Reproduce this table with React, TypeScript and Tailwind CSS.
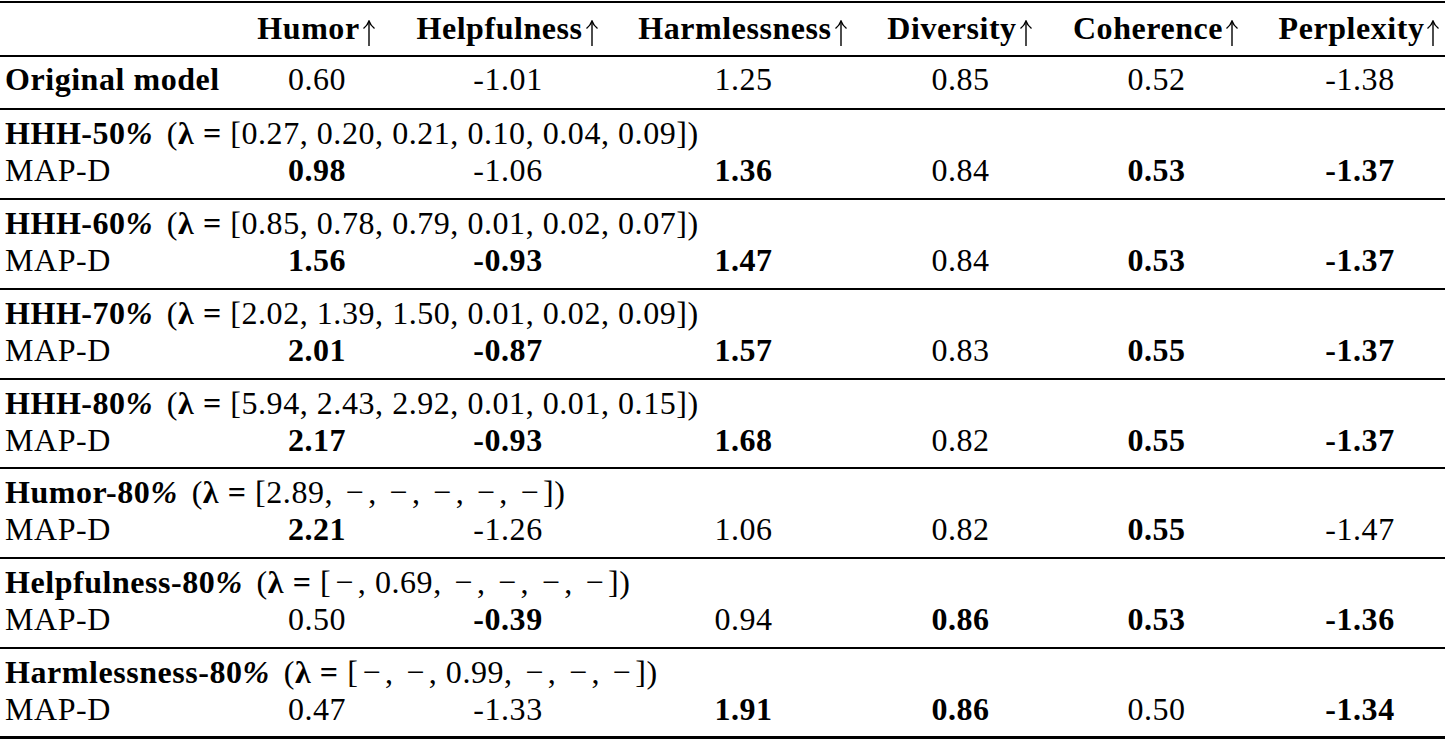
const cols = "grid grid-cols-[237px_160px_222px_249px_185px_207px_185px]";

const headers = ["Humor", "Helpfulness", "Harmlessness", "Diversity", "Coherence", "Perplexity"];

type Cell = { v: string; b?: boolean };

type Group = {
  name: string;
  lambda: (number | null)[];
  cells: Cell[];
  pb: string;
};

const c = (v: string, b = false): Cell => ({ v, b });

const groups: Group[] = [
  {
    name: "HHH-50",
    lambda: [0.27, 0.2, 0.21, 0.1, 0.04, 0.09],
    cells: [c("0.98", true), c("-1.06"), c("1.36", true), c("0.84"), c("0.53", true), c("-1.37", true)],
    pb: "pb-[9px]",
  },
  {
    name: "HHH-60",
    lambda: [0.85, 0.78, 0.79, 0.01, 0.02, 0.07],
    cells: [c("1.56", true), c("-0.93", true), c("1.47", true), c("0.84"), c("0.53", true), c("-1.37", true)],
    pb: "pb-[9px]",
  },
  {
    name: "HHH-70",
    lambda: [2.02, 1.39, 1.5, 0.01, 0.02, 0.09],
    cells: [c("2.01", true), c("-0.87", true), c("1.57", true), c("0.83"), c("0.55", true), c("-1.37", true)],
    pb: "pb-[9px]",
  },
  {
    name: "HHH-80",
    lambda: [5.94, 2.43, 2.92, 0.01, 0.01, 0.15],
    cells: [c("2.17", true), c("-0.93", true), c("1.68", true), c("0.82"), c("0.55", true), c("-1.37", true)],
    pb: "pb-[8px]",
  },
  {
    name: "Humor-80",
    lambda: [2.89, null, null, null, null, null],
    cells: [c("2.21", true), c("-1.26"), c("1.06"), c("0.82"), c("0.55", true), c("-1.47")],
    pb: "pb-[9px]",
  },
  {
    name: "Helpfulness-80",
    lambda: [null, 0.69, null, null, null, null],
    cells: [c("0.50"), c("-0.39", true), c("0.94"), c("0.86", true), c("0.53", true), c("-1.36", true)],
    pb: "pb-[9px]",
  },
  {
    name: "Harmlessness-80",
    lambda: [null, null, 0.99, null, null, null],
    cells: [c("0.47"), c("-1.33"), c("1.91", true), c("0.86", true), c("0.50"), c("-1.34", true)],
    pb: "pb-[8px]",
  },
];

// thin math-style up arrow (\uparrow)
function UpArrow() {
  return (
    <svg
      width="16"
      height="26"
      viewBox="0 0 16 26"
      className="inline-block align-[-7px] ml-[1px]"
      fill="none"
      stroke="black"
      strokeWidth="1.4"
    >
      <path d="M8 1.5V26" />
      <path d="M2.5 8.5C5 6.5 7 4 8 1C9 4 11 6.5 13.5 8.5" />
    </svg>
  );
}

function ValueCells({ cells }: { cells: Cell[] }) {
  return (
    <>
      {cells.map((cell, i) => (
        <div
          key={i}
          className={`text-center ${cell.b ? "font-bold" : ""} ${i === 5 ? "pl-[15px]" : ""}`}
        >
          {cell.v}
        </div>
      ))}
    </>
  );
}

function LambdaList({ values }: { values: (number | null)[] }) {
  return (
    <span>
      [
      {values.map((v, i) => (
        <span key={i}>
          {v === null ? <span className="px-[4px]">−</span> : v.toFixed(2)}
          {i < values.length - 1 ? ", " : ""}
        </span>
      ))}
      ])
    </span>
  );
}

export default function App() {
  return (
    <div className="w-[1445px] h-[740px] bg-white pt-[1px] font-['Liberation_Serif',serif] text-[32px] leading-[37px] tracking-[0.55px] text-black">
      {/* header */}
      <div className={`${cols} border-t-2 border-black pt-[7px] pb-[8px]`}>
        <div />
        {headers.map((h, i) => (
          <div key={h} className={`text-center font-bold whitespace-nowrap ${i === 5 ? "pl-[15px]" : ""}`}>
            {h}
            <UpArrow />
          </div>
        ))}
      </div>

      {/* original model */}
      <div className={`${cols} border-t-2 border-black pt-[4px] pb-[10px]`}>
        <div className="pl-[5px] font-bold whitespace-nowrap">Original model</div>
        <ValueCells
          cells={[c("0.60"), c("-1.01"), c("1.25"), c("0.85"), c("0.52"), c("-1.38")]}
        />
      </div>

      {groups.map((g, gi) => (
        <div
          key={g.name}
          className={`border-t-2 border-black pt-[5px] ${g.pb} ${
            gi === groups.length - 1 ? "border-b-[3px]" : ""
          }`}
        >
          <div className="pl-[5px] whitespace-nowrap">
            <span className="font-bold">
              {g.name}
              <span className="italic">%</span>
            </span>
            <span className="ml-[14px]">(</span>
            <span className="font-bold">λ</span> <span className="font-bold">=</span>{" "}
            <LambdaList values={g.lambda} />
          </div>
          <div className={cols}>
            <div className="pl-[5px]">MAP-D</div>
            <ValueCells cells={g.cells} />
          </div>
        </div>
      ))}
    </div>
  );
}
